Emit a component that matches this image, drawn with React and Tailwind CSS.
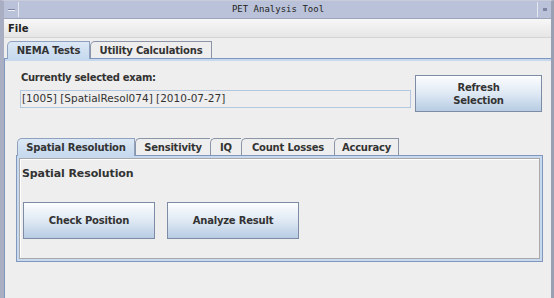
const MAIN_TABS = [
  { label: 'NEMA Tests', w: 'w-[83px]', selected: true },
  { label: 'Utility Calculations', w: 'w-[122px]' },
]

const TEST_TABS = [
  { label: 'Spatial Resolution', w: 'w-[118px]', selected: true },
  { label: 'Sensitivity', w: 'w-[75px]' },
  { label: 'IQ', w: 'w-[31px]' },
  { label: 'Count Losses', w: 'w-[93px]' },
  { label: 'Accuracy', w: 'w-[65px]' },
]

function Tab({ label, w, selected, last }) {
  return (
    <div
      className={`h-[17px] flex items-center justify-center rounded-tl-[5px] border-t border-l text-[10px] font-bold tracking-[-0.2px] text-[#333] ${w} ${
        last ? 'border-r' : ''
      } ${
        selected
          ? 'relative z-10 -mb-px h-[18px] border-r border-[#8ea2c0] bg-linear-to-b from-[#dce8f5] to-[#c6d9ee]'
          : 'border-[#8c95a8] bg-[#eeeeee]'
      }`}
    >
      {label}
    </div>
  )
}

function OceanButton({ children, className }) {
  return (
    <button
      className={`flex items-center justify-center border border-[#7d8ba5] bg-linear-to-b from-[#fcfdfe] via-[#dfe9f4] to-[#b7cce3] text-[10px] font-bold tracking-[-0.2px] leading-[13px] text-[#333] ${className}`}
    >
      {children}
    </button>
  )
}

export default function App() {
  return (
    <div className="w-[554px] h-[298px] overflow-hidden flex flex-col bg-[#eeeeee] border-l-[4px] border-r-[3px] border-t border-l-[#a9aec2] border-r-[#9aa0b4] border-t-[#c9ccd8] font-['DejaVu_Sans',sans-serif]">
      {/* title bar */}
      <div className="h-[18px] flex bg-[#bac2da] border-b border-[#9ea4ba]">
        <div className="w-[15px] my-[1px] border-r border-[#e6e8f0] flex items-center justify-center">
          <div className="w-[7px] h-[2px] bg-[#7d85a0] border-b border-[#f0f0f6]" />
        </div>
        <div className="flex-1 flex items-center justify-center font-['DejaVu_Sans_Mono',monospace] text-[9px] text-[#222]">
          PET Analysis Tool
        </div>
        <div className="w-[14px] my-[1px] border-l border-[#e6e8f0] flex items-center justify-center">
          <div className="w-[4px] h-[3px] bg-[#7d85a0]" />
        </div>
      </div>

      {/* menu bar */}
      <div className="h-[19px] flex items-center pl-[4px] bg-linear-to-b from-[#f7f7f7] to-[#e6e6e6] border-b border-[#d4d4d4]">
        <span className="text-[10px] font-bold text-[#222]">File</span>
      </div>

      {/* main tabs */}
      <div className="flex items-end h-[20px] pl-[3px]">
        {MAIN_TABS.map((t, i) => (
          <Tab key={t.label} {...t} last={i === MAIN_TABS.length - 1} />
        ))}
      </div>
      <div className="flex-1 flex flex-col border-t border-l border-[#7f97bd]">
        <div className="h-[2px] bg-[#c6d9ee]" />

        <div className="flex items-start pl-[15px] pt-[9px]">
          <div className="w-[391px] flex flex-col">
            <span className="h-[14px] pl-[1px] flex items-center text-[10px] font-bold tracking-[-0.3px] text-[#333]">
              Currently selected exam:
            </span>
            <div className="mt-[6px] h-[18px] flex items-center pl-[1px] border border-[#b3c8e0] text-[10.5px] text-[#333]">
              [1005] [SpatialResol074] [2010-07-27]
            </div>
          </div>
          <OceanButton className="ml-[4px] mt-[5px] w-[127px] h-[37px] flex-col">
            <span>Refresh</span>
            <span>Selection</span>
          </OceanButton>
        </div>

        {/* test tabs */}
        <div className="ml-[11px] mt-[26px] w-[527px] flex flex-col">
          <div className="flex items-end h-[17px] pl-[1px]">
            {TEST_TABS.map((t, i) => (
              <Tab key={t.label} {...t} last={i === TEST_TABS.length - 1} />
            ))}
          </div>
          <div className="h-[107px] border border-[#8197bc] bg-[#c6d9ee] p-[2px]">
            <div className="h-full border border-[#a9a9a9] bg-[#eeeeee] pl-[2px] shadow-[inset_1px_1px_0_#ffffff]">
              <div className="h-[14px] mt-[8px] flex items-center text-[11px] font-bold tracking-[-0.1px] text-[#333]">
                Spatial Resolution
              </div>
              <div className="flex gap-[12px] mt-[21px] pl-[1px]">
                <OceanButton className="w-[132px] h-[37px]">Check Position</OceanButton>
                <OceanButton className="w-[132px] h-[37px]">Analyze Result</OceanButton>
              </div>
            </div>
          </div>
        </div>
      </div>
    </div>
  )
}
